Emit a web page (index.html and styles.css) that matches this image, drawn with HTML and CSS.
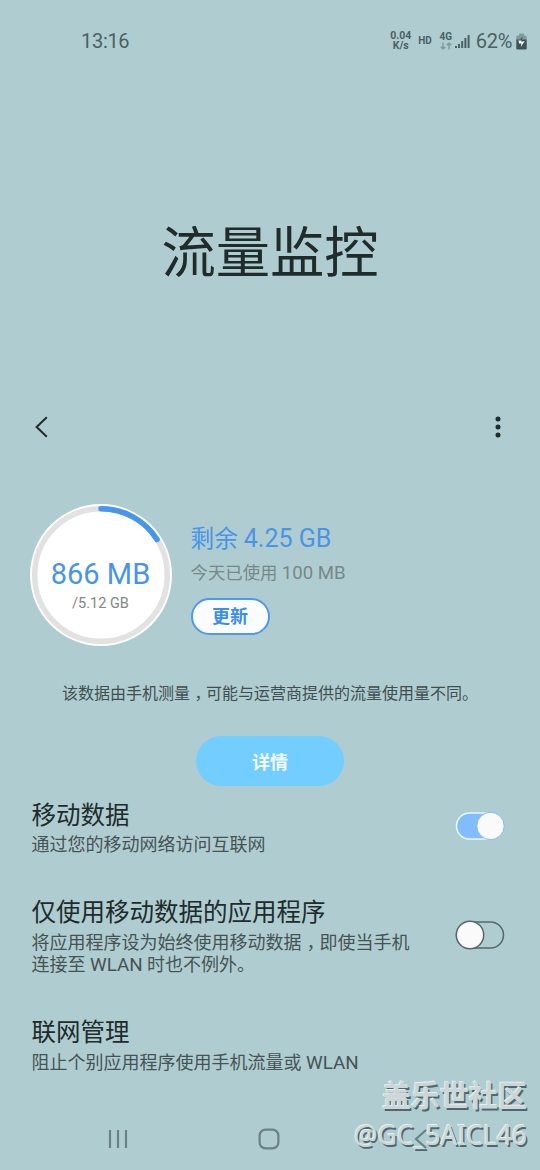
FILE: index.html
```html
<!DOCTYPE html>
<html lang="zh-CN">
<head>
<meta charset="utf-8">
<title>流量监控</title>
<link rel="stylesheet" href="styles.css">
</head>
<body>
<div class="screen">
  <header class="status">
    <span class="clock">13:16</span>
    <div class="indicators">
      <div class="speed"><span>0.04</span><span>K/s</span></div>
      <span class="hd">HD</span>
      <div class="network">
        <span class="generation">4G</span>
        <svg class="arrows" width="12" height="8" viewBox="0 0 12 8"><path d="M3 .5V7M.7 4.7 3 7l2.3-2.3M9 7.500V1M6.700 3.300 9 1l2.300 2.300"/></svg>
      </div>
      <svg class="signal" width="15" height="15" viewBox="0 0 15 15"><path d="M1 12v2M4 10v4M7.200 7v7M10.400 4v10M13.600 1v13"/></svg>
      <span class="percent">62%</span>
      <svg class="battery" width="11" height="17" viewBox="0 0 11 17"><path class="battery-empty" d="M3 1.500Q3 .5 4 .5h3q1 0 1 1v1h1.500q1.200 0 1.200 1.200V7H.3V3.700q0-1.200 1.200-1.200H3z"/><path class="battery-full" d="M.3 6.500h10.400v8.800q0 1.200-1.200 1.200h-8q-1.200 0-1.200-1.200z"/><path class="bolt" d="M2.500 7.500h2.700l.4 1.300 3.200-.8L4.800 14l.6-3.500H3z"/><path class="battery-full" d="M4 6.400 6.600 3.500 6 6.800z"/></svg>
    </div>
  </header>
  <h1 class="title">流量监控</h1>
  <nav class="toolbar">
    <svg width="18" height="24" viewBox="0 0 18 24"><path class="back" d="M14.800 2.200 4.600 12l10.200 9.800"/></svg>
    <svg class="more" width="6" height="22" viewBox="0 0 6 22"><circle cx="3" cy="3" r="2.500"/><circle cx="3" cy="11" r="2.500"/><circle cx="3" cy="19" r="2.500"/></svg>
  </nav>
  <section class="usage">
    <div class="gauge">
      <svg class="ring" width="142" height="142" viewBox="0 0 142 142"><circle class="disc" cx="71" cy="71" r="71"/><circle class="track" cx="71" cy="71" r="66.300"/><path class="progress" d="M71 4.700A66.300 66.300 0 0 1 127 35.500"/></svg>
      <span class="used">866 MB</span>
      <span class="limit">/5.12 GB</span>
    </div>
    <div class="summary">
      <span class="remaining">剩余 <span class="amount">4.25 GB</span></span>
      <span class="today">今天已使用 <span class="amount">100 MB</span></span>
      <button class="update">更新</button>
    </div>
  </section>
  <p class="note">该数据由手机测量<span class="comma">，</span>可能与运营商提供的流量使用量不同。</p>
  <button class="details">详情</button>
  <main class="settings">
    <div class="row row-data">
      <div><h2>移动数据</h2><p>通过您的移动网络访问互联网</p></div>
      <svg class="switch" width="50" height="30" viewBox="0 0 50 30"><rect class="on-track" x="1.500" y="2" width="46" height="26" rx="13"/><circle class="on-thumb" cx="35.500" cy="15" r="13.700"/></svg>
    </div>
    <div class="row row-apps">
      <div><h2>仅使用移动数据的应用程序</h2><p>将应用程序设为始终使用移动数据<span class="comma">，</span>即使当手机<br>连接至 <span class="latin">WLAN</span> 时也不例外。</p></div>
      <svg class="switch" width="50" height="30" viewBox="0 0 50 30"><rect class="off-track" x="1.500" y="2" width="47" height="26" rx="13"/><circle class="off-thumb" cx="15" cy="15" r="13.700"/></svg>
    </div>
    <div class="row row-manage">
      <div><h2>联网管理</h2><p>阻止个别应用程序使用手机流量或 <span class="latin">WLAN</span></p></div>
    </div>
  </main>
  <div class="watermark"><span class="community">盖乐世社区</span><span class="author">@GC_5AICL46</span></div>
  <footer class="navigation">
    <svg width="20" height="22" viewBox="0 0 20 22"><path d="M2 2v18M10 2v18M18 2v18"/></svg>
    <svg class="home" width="22" height="22" viewBox="0 0 22 22"><rect x="1.600" y="1.600" width="18.800" height="18.800" rx="6"/></svg>
    <svg width="13" height="22" viewBox="0 0 13 22"><path d="M12 2 2 11l10 9"/></svg>
  </footer>
</div>
</body>
</html>
```
FILE: styles.css
```css
* { box-sizing: border-box; }
body { margin: 0; font-family: Roboto, "Noto Sans CJK SC", sans-serif; background: #afcdd0; color: #202b2b; }
.screen { position: relative; width: 540px; height: 1170px; overflow: hidden; display: flex; flex-direction: column; }
svg { display: block; flex: none; fill: none; }
h1, h2, p { margin: 0; font-weight: 400; }
button { display: block; font-family: inherit; padding: 0; }

.status { height: 82px; padding: 0 13px 0 81px; display: flex; align-items: center; justify-content: space-between; color: #4b6062; }
.clock { font-size: 20px; letter-spacing: -.3px; }
.indicators { display: flex; align-items: center; }
.speed { width: 23px; display: flex; flex-direction: column; align-items: center; font-size: 10.500px; line-height: 10px; font-weight: 700; }
.hd { margin: -2px 7px 0 6px; font-size: 10px; font-weight: 700; }
.network { width: 14px; display: flex; flex-direction: column; align-items: center; font-size: 10px; line-height: 10px; font-weight: 700; }
.arrows { stroke: #7d999b; stroke-width: 1.400; }
.signal { margin-left: 2px; stroke: #4b6062; stroke-width: 2; }
.percent { margin: 0 4px 0 6px; font-size: 20px; letter-spacing: -.3px; }
.battery-empty { fill: #809b9d; }
.battery-full { fill: #405255; }
.bolt { fill: #eff8f8; }

.title { height: 318px; line-height: 344px; text-align: center; font-size: 54.300px; }
.toolbar { height: 54px; padding: 0 39px 0 32px; display: flex; align-items: center; justify-content: space-between; }
.back { stroke: #202b2b; stroke-width: 2; }
.more { fill: #202b2b; }

.usage { height: 192px; padding: 50px 0 0 29.500px; display: flex; gap: 19px; }
.gauge { width: 142px; height: 142px; display: grid; grid-template-rows: 53px 35px 22px 32px; justify-items: center; }
.ring { grid-area: 1 / 1 / 5 / 2; }
.disc { fill: #fff; }
.track { stroke: #e2e2e2; stroke-width: 5.500; }
.progress { stroke: #4696ec; stroke-width: 5.500; stroke-linecap: round; }
.used { grid-area: 2 / 1; line-height: 35px; font-size: 29px; color: #4a94e7; }
.limit { grid-area: 3 / 1; line-height: 23px; font-size: 14.500px; color: #868686; }
.summary { display: flex; flex-direction: column; align-items: flex-start; padding-top: 16px; }
.remaining { height: 36px; line-height: 37px; font-size: 23.700px; color: #4a94e7; white-space: nowrap; }
.remaining .amount { font-size: 25px; }
.today { height: 34px; line-height: 34px; font-size: 17.400px; color: #768889; white-space: nowrap; }
.today .amount { font-size: 18.600px; }
.update { margin-top: 8px; width: 79px; height: 37px; line-height: 34px; border: 2px solid #4e99e8; border-radius: 19px; background: #fafcff; font-size: 18px; font-weight: 700; color: #3e8de7; }
.note { height: 90px; line-height: 96px; padding-left: 62px; font-size: 16px; color: #414e4f; white-space: nowrap; }
.details { align-self: center; width: 148px; height: 50px; border: 0; border-radius: 25px; background: #73cdff; font-size: 18px; font-weight: 700; color: #f5fcff; }
.comma { padding: 0 .22em 0 .28em; font-feature-settings: "halt"; }

.settings { height: 306px; padding-top: 12px; }
.row { display: flex; justify-content: space-between; padding: 0 35px 0 31.500px; }
h2 { height: 37px; line-height: 35px; font-size: 24.500px; white-space: nowrap; }
.row p { line-height: 22px; font-size: 18px; color: #465354; white-space: nowrap; }
.latin { font-size: 18.800px; line-height: 1; }
.row-data { height: 97px; }
.row-data h2 { height: 36px; }
.row-apps { height: 120px; }
.row-data .switch { margin-top: 13px; }
.row-apps .switch { margin-top: 25px; }
.on-track { fill: #81bdfc; stroke: #e9f7fc; stroke-width: 1.500; }
.on-thumb { fill: #fafafa; stroke: #83b9ef; stroke-width: 1; }
.off-track { stroke: #586869; stroke-width: 1.500; }
.off-thumb { fill: #fafafa; stroke: #586869; stroke-width: 1.500; }
.navigation { position: relative; height: 78px; padding: 15px 113px 0 108px; display: flex; align-items: center; justify-content: space-between; stroke: #6c8183; stroke-width: 2.200; }
.home { margin-right: 4px; }
.watermark { position: absolute; right: 13px; top: 1078px; display: flex; flex-direction: column; align-items: flex-end; color: #ccd6d8; text-shadow: -1px -1px #e2f0f1, 1.500px 1.500px #50686b; white-space: nowrap; }
.community { height: 38px; line-height: 38px; font-size: 29px; font-weight: 700; }
.author { height: 40px; line-height: 39px; font-family: "Noto Sans", sans-serif; font-size: 26.400px; }
```
